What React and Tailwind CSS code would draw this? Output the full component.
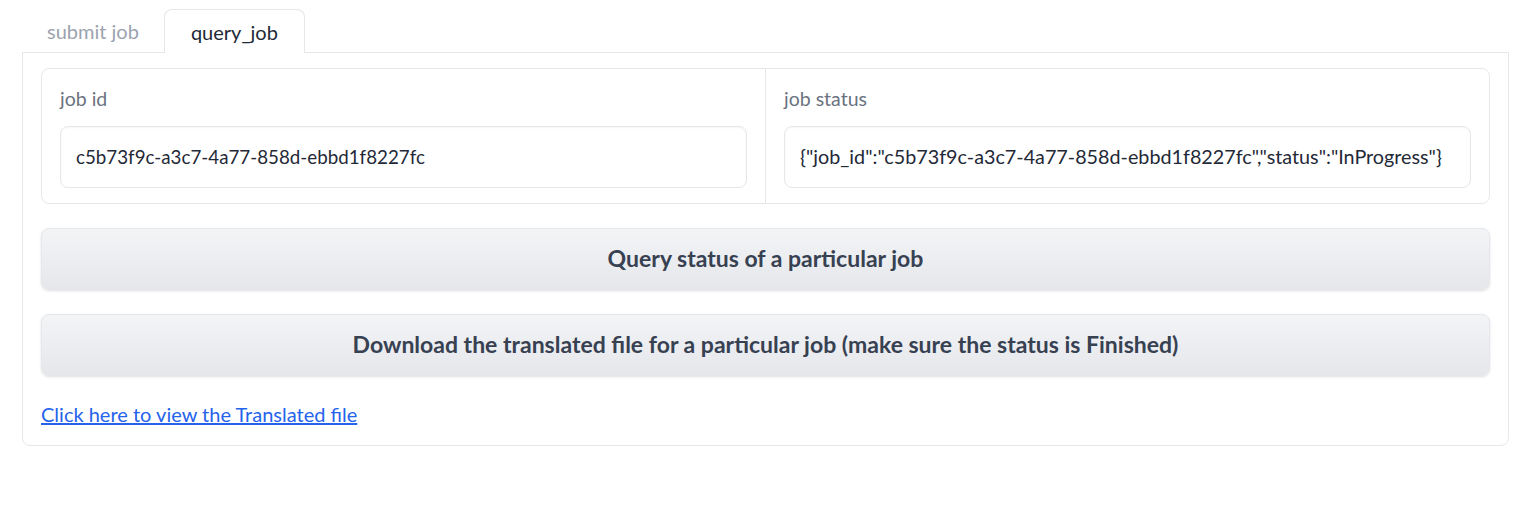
export default function App() {
  return (
    <div className="min-h-[505px] bg-white px-[22px] pt-[9px] font-['Lato',sans-serif]">
      <div className="flex items-end">
        <button className="h-[43px] px-[25px] text-[20px] text-[#9ca3af]">submit job</button>
        <button className="relative z-10 -mb-px h-[44px] rounded-t-lg border border-b-0 border-[#e5e7eb] bg-white px-[26px] text-[20px] text-[#1f2937]">
          query_job
        </button>
      </div>
      <div className="flex flex-col rounded-b-lg border border-[#e5e7eb] px-[18px] pt-[15px] pb-[18px]">
        <div className="flex rounded-lg border border-[#e5e7eb]">
          <div className="flex flex-1 flex-col gap-[14px] px-[18px] pt-[17px] pb-[15px]">
            <span className="text-[19.5px] leading-[26px] text-[#6b7280]">job id</span>
            <div className="flex h-[62px] items-center rounded-lg border border-[#e5e7eb] bg-white px-[15px] text-[18.75px] text-[#1f2937] shadow-[inset_0_1px_2px_rgba(0,0,0,0.04)]">
              c5b73f9c-a3c7-4a77-858d-ebbd1f8227fc
            </div>
          </div>
          <div className="w-px bg-[#e5e7eb]" />
          <div className="flex flex-1 flex-col gap-[14px] px-[18px] pt-[17px] pb-[15px]">
            <span className="text-[19.5px] leading-[26px] text-[#6b7280]">job status</span>
            <div className="flex h-[62px] items-center rounded-lg border border-[#e5e7eb] bg-white px-[15px] text-[19.75px] text-[#1f2937] shadow-[inset_0_1px_2px_rgba(0,0,0,0.04)]">
              {'{"job_id":"c5b73f9c-a3c7-4a77-858d-ebbd1f8227fc","status":"InProgress"}'}
            </div>
          </div>
        </div>
        <button className="mt-[24px] h-[62px] rounded-lg border border-[#e5e7eb] bg-gradient-to-b from-[#f3f4f6] to-[#e5e7eb] pb-px text-[23px] font-bold text-[#374151] shadow-sm">
          Query status of a particular job
        </button>
        <button className="mt-[24px] h-[62px] rounded-lg border border-[#e5e7eb] bg-gradient-to-b from-[#f3f4f6] to-[#e5e7eb] pb-px text-[23px] font-bold text-[#374151] shadow-sm">
          Download the translated file for a particular job (make sure the status is Finished)
        </button>
        <div className="mt-[25px] text-[20px] leading-[26px]">
          <a href="#" className="text-[#2563eb] underline">Click here to view the Translated file</a>
        </div>
      </div>
    </div>
  );
}
